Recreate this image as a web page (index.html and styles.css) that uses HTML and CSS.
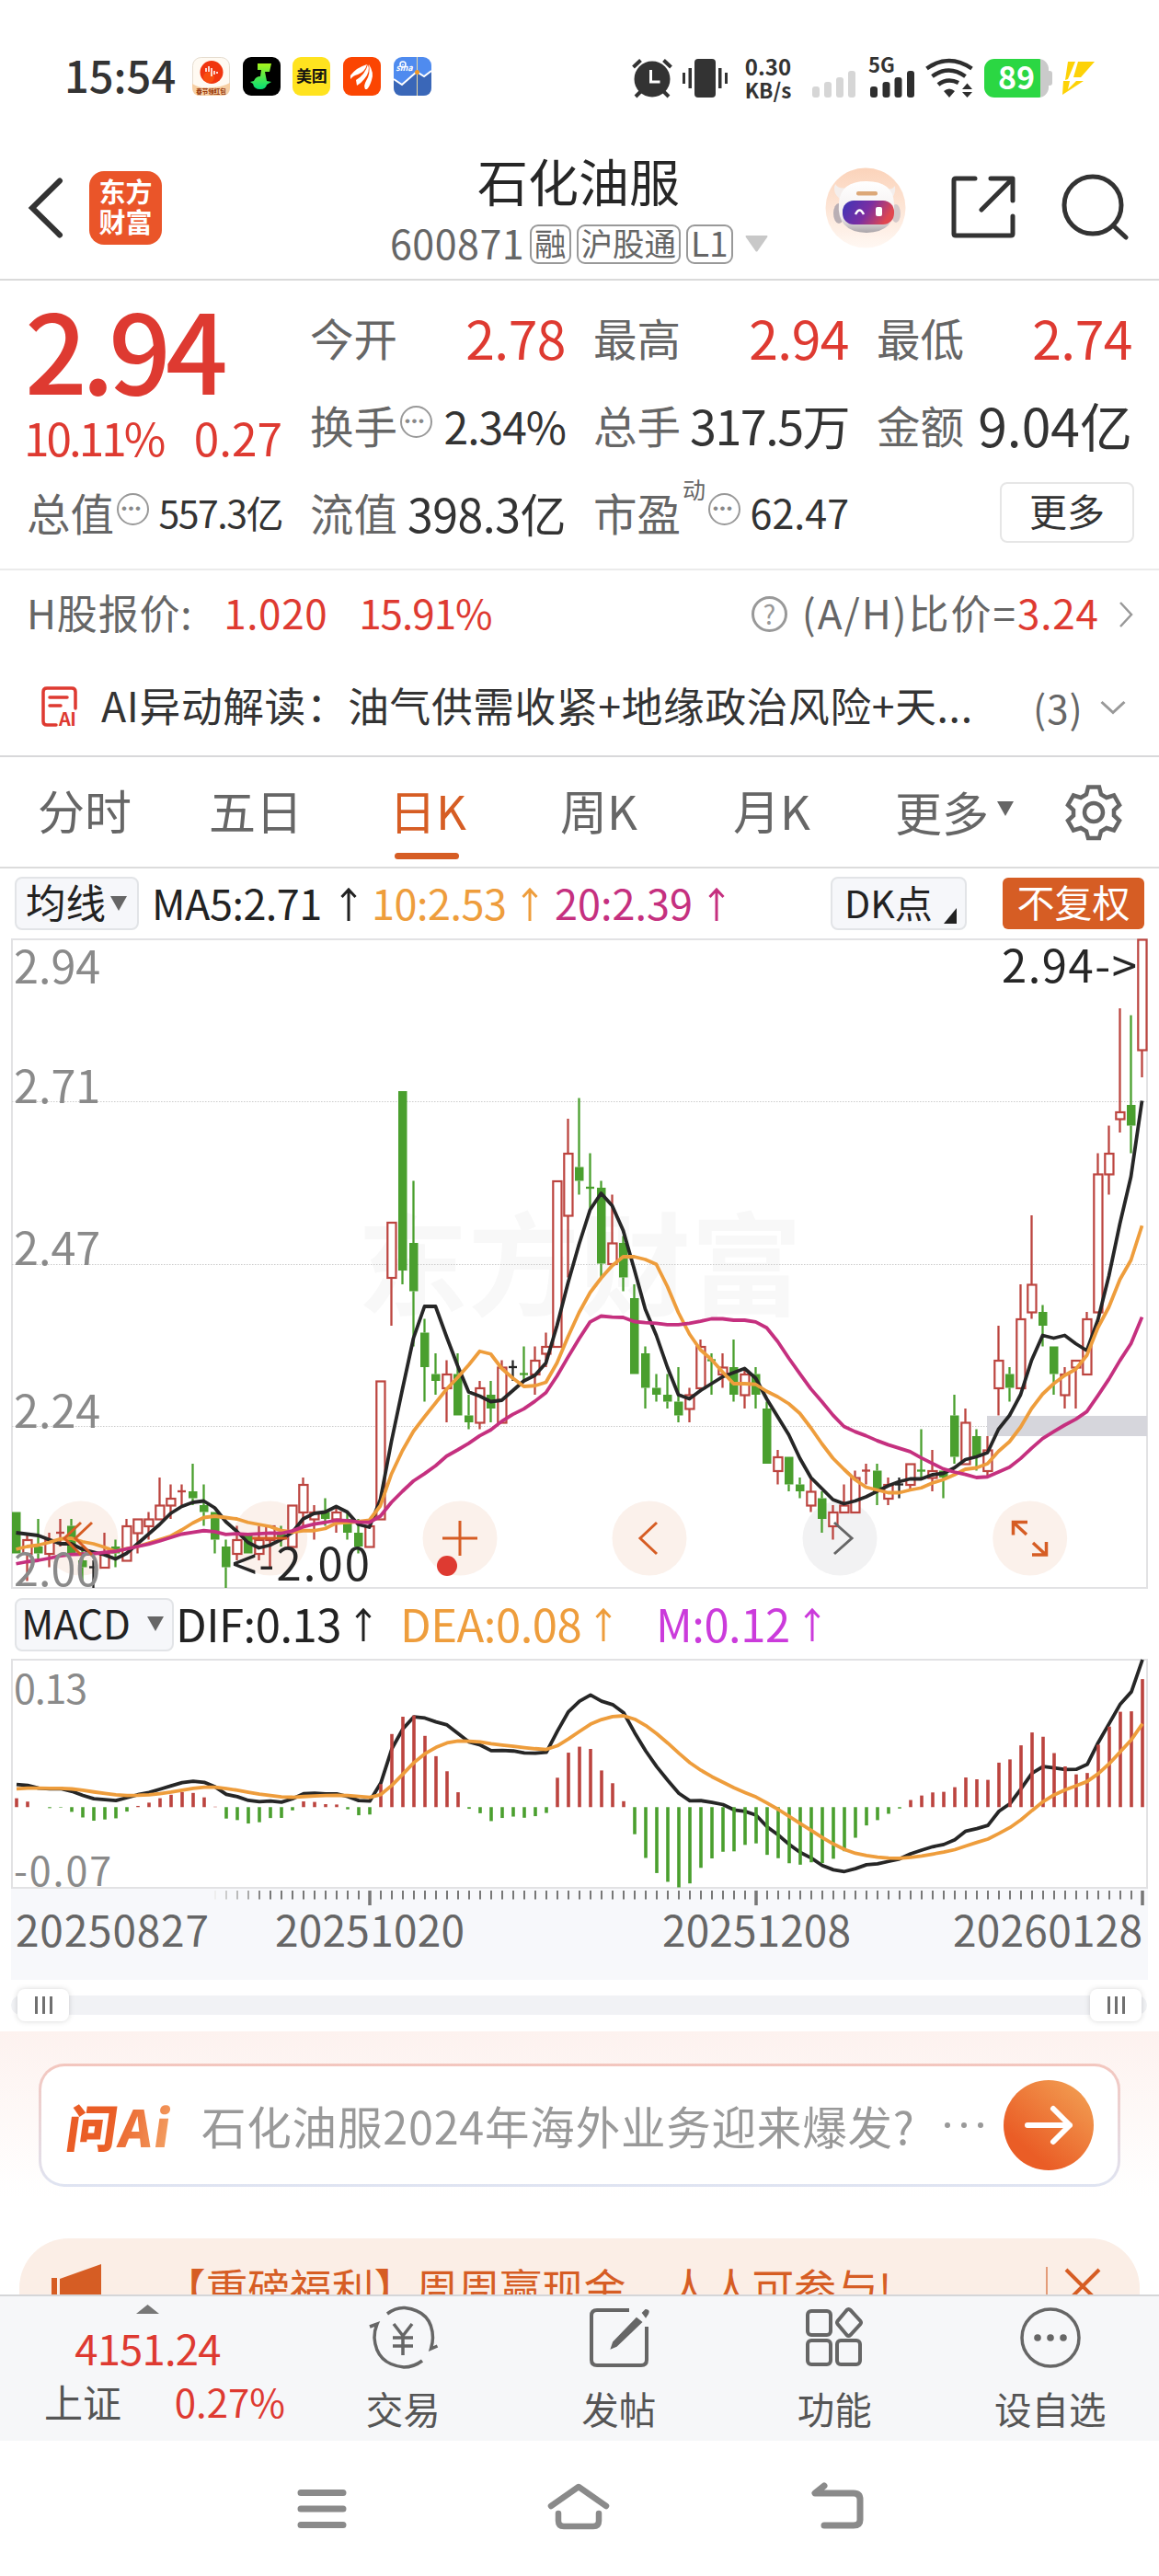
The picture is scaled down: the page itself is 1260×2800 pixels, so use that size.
FILE: index.html
```html
<!DOCTYPE html>
<html lang="zh-CN">
<head>
    <meta charset="UTF-8">
    <meta name="viewport" content="width=device-width, initial-scale=1.0">
    <title>石化油服 600871</title>
    <link rel="stylesheet" href="styles.css">
</head>
<body>
    <div class="status-bar">
        <span class="clock">15:54</span>
        <div class="app-icons">
            <svg width="41" height="42" viewBox="0 0 41 42">
                <rect x=".5" y=".5" width="40" height="41" rx="9" fill="#fffaf2" stroke="#e6ddd0"/>
                <path d="M0 29q10 6 20 4 12 0 21-5v5q0 9-9 9H9q-9 0-9-9z" fill="#f6cfa4"/>
                <circle cx="21" cy="16.500" r="12.500" fill="#f0350f"/>
                <circle cx="18" cy="22" r="6" fill="#fb5a10" opacity=".7"/>
                <path d="M15 12v4M18 10v6M21 12v9M24 15v4M27 16v2" stroke="#fff" stroke-width="1.600"/>
                <text x="20.500" y="40" class="tiny-label">春节领红包</text>
            </svg>
            <svg width="41" height="42" viewBox="0 0 41 42">
                <defs><linearGradient id="note" x1="0" y1="0" x2="0" y2="1"><stop offset="0" stop-color="#a8f51c"/><stop offset="1" stop-color="#04dd76"/></linearGradient></defs>
                <rect width="41" height="42" rx="9" fill="#000"/>
                <path d="M16 7h15l-2 9h-5l2 10 5 1-5 3q-1 5-7 5-7 0-8-6l-3-2 4-1q2-5 7-5l1-7h-4z" fill="url(#note)"/>
            </svg>
            <div class="meituan">美团</div>
            <svg width="41" height="42" viewBox="0 0 41 42">
                <rect width="41" height="42" rx="9" fill="#fb4502"/>
                <path d="M8 20q7-9 18-12-2 8-10 11-5 1-8 5zM14 25q10-6 13-17 3 8-4 16-4 5-8 7zM24 35q-2-4 1-9 5-8 3-18 6 9 3 17-2 7-5 10z" fill="#fff"/>
            </svg>
            <svg width="41" height="42" viewBox="0 0 41 42">
                <rect width="41" height="42" rx="9" fill="#4f8bef"/>
                <path d="M0 24l9 6 16-14 8 5 8-6v18q0 9-9 9H9q-9 0-9-9z" fill="#3a67b8"/>
                <path d="M0 24l9 6 16-14 8 5 8-6" fill="none" stroke="#fff" stroke-width="2"/>
                <path d="M25.500 0v42" stroke="#e8d9a5"/>
                <circle cx="25.500" cy="16.500" r="2.500" fill="#f59a23"/>
                <circle cx="10" cy="8" r="3" fill="none" stroke="#fff" stroke-width="1.500"/>
                <text x="11.500" y="15" class="sina">sina</text>
            </svg>
        </div>
        <div class="system-icons">
            <svg width="44" height="42" viewBox="0 0 44 42" fill="none" stroke="#333" stroke-width="4">
                <circle cx="22" cy="22" r="19.500" fill="#333" stroke="none"/>
                <path d="M1.500 9l8-7.500M42.500 9l-8-7.500M4 41l6-6M40 41l-6-6"/>
                <path d="M20.500 12v13h10" stroke="#fff" stroke-width="3"/>
            </svg>
            <svg class="vibrate" width="49" height="42" viewBox="0 0 49 42" fill="#333">
                <rect x="13" width="23" height="42" rx="4"/>
                <path d="M0 15h3v12H0zM6.500 10h3.500v22H6.500zM39 10h3.500v22H39zM46 15h3v12h-3z"/>
            </svg>
            <div class="net-speed"><b>0.30</b><span>KB/s</span></div>
            <svg class="signal-off" width="47" height="29" viewBox="0 0 47 29" fill="#d6d6d6">
                <rect y="17" width="8" height="12" rx="3"/><rect x="13" y="12" width="8" height="17" rx="3"/><rect x="26" y="7" width="8" height="22" rx="3"/><rect x="39" width="8" height="29" rx="3"/>
            </svg>
            <div class="signal-5g">
                <b>5G</b>
                <svg width="48" height="29" viewBox="0 0 48 29" fill="#2e2e2e">
                    <rect y="17" width="8" height="12" rx="3"/><rect x="13.500" y="12" width="8" height="17" rx="3"/><rect x="26.500" y="7" width="8" height="22" rx="3"/><rect x="40" width="8" height="29" rx="3"/>
                </svg>
            </div>
            <svg class="wifi" width="52" height="42" viewBox="0 0 52 42" fill="none" stroke="#2e2e2e" stroke-width="4.500">
                <path d="M1.500 10.500q24-17 49 0M7.500 19q18-13 36 0M14 28q10-8 22-2"/>
                <path d="M20 35q6-5 12 0l-6 7zM40 33l5.500-6.500L51 33zM40 36l5.500 6L51 36z" fill="#2e2e2e" stroke="none"/>
            </svg>
            <div class="battery"><b>89</b></div>
            <svg class="bolt" width="35" height="36" viewBox="0 0 35 36" fill="#fdd207"><path d="M6 0h8L6 19 3 20zM17 0h18L20 17h-8zM1 21h7l-2 9 9-9h8L0 36z"/></svg>
        </div>
    </div>

    <header class="header">
        <svg class="back" width="38" height="66" viewBox="0 0 38 66"><path d="M34 3.500L4 33l30 29.500" fill="none" stroke="#333" stroke-width="6" stroke-linecap="round"/></svg>
        <div class="app-logo">东方<br>财富</div>
        <div class="stock-title">
            <h1>石化油服</h1>
            <div class="stock-code">
                <span class="code">600871</span><i class="tag">融</i><i class="tag">沪股通</i><i class="tag l1">L1</i>
                <svg width="25" height="18" viewBox="0 0 25 18"><path d="M1 0h23q1 1 0 2L13.500 17q-1 1-2 0L1 2q-1-1 0-2z" fill="#c8c8c8"/></svg>
            </div>
        </div>
        <div class="header-actions">
            <svg width="88" height="88" viewBox="0 0 88 88">
                <defs>
                    <linearGradient id="halo" x1="0" y1="0" x2="0" y2="1"><stop offset="0" stop-color="#fbd3ba"/><stop offset="1" stop-color="#fff8f3"/></linearGradient>
                    <linearGradient id="visor" x1="0" y1="0" x2="1" y2=".3"><stop offset="0" stop-color="#3c35b8"/><stop offset=".55" stop-color="#7b2fa2"/><stop offset="1" stop-color="#e0474f"/></linearGradient>
                    <linearGradient id="shell" x1="0" y1="0" x2="0" y2="1"><stop offset="0" stop-color="#fff"/><stop offset=".7" stop-color="#f3efee"/><stop offset="1" stop-color="#a9a3a8"/></linearGradient>
                </defs>
                <circle cx="44" cy="44" r="43.500" fill="url(#halo)"/>
                <path d="M11 18q4 6 12 4l-4 14q-12-7-8-18zM76 20q-4 6-12 2l4 14q10-5 8-16z" fill="#f4eeec"/>
                <ellipse cx="15" cy="50" rx="6" ry="11" fill="#b9afb4"/><ellipse cx="77" cy="50" rx="5" ry="10" fill="#d3c8c9"/>
                <path d="M15 38q2-23 30-23 29 0 30 24 3 31-30 32-33-1-30-33z" fill="url(#shell)"/>
                <rect x="34" y="26" width="23" height="4.500" rx="2" fill="#dca878"/>
                <rect x="19" y="36" width="56" height="26" rx="12" fill="url(#visor)"/>
                <path d="M33 51q4.500-9 9 0" fill="none" stroke="#fff" stroke-width="2.500"/>
                <rect x="55" y="43" width="7" height="10" rx="2" fill="#fff"/>
            </svg>
            <svg class="share" width="70" height="70" viewBox="0 0 70 70" fill="none" stroke="#333" stroke-width="5" stroke-linecap="round" stroke-linejoin="round"><path d="M26 4H5Q3 4 3 6v58q0 2 2 2h60q2 0 2-2V45M43 4h24v24M66 5L33 38"/></svg>
            <svg class="search" width="72" height="72" viewBox="0 0 72 72" fill="none" stroke="#333" stroke-width="5" stroke-linecap="round"><circle cx="34" cy="34" r="31"/><path d="M56 56l14 13"/></svg>
        </div>
    </header>

    <section class="quote">
        <div class="price-block">
            <div class="price">2.94</div>
            <div class="change"><span>10.11%</span><span class="diff">0.27</span></div>
        </div>
        <div class="stat"><label>今开</label><span class="up big">2.78</span></div>
        <div class="stat"><label>最高</label><span class="up big">2.94</span></div>
        <div class="stat"><label>最低</label><span class="up big">2.74</span></div>
        <div class="stat"><label>换手<i class="dots">•••</i></label><span class="size-49">2.34%</span></div>
        <div class="stat"><label>总手</label><span class="size-52">317.5万</span></div>
        <div class="stat"><label>金额</label><span class="size-55">9.04亿</span></div>
        <div class="stat"><label>总值<i class="dots">•••</i></label><span class="size-40">557.3亿</span></div>
        <div class="stat"><label>流值</label><span class="size-50">398.3亿</span></div>
        <div class="stat"><label>市盈<sup>动</sup><i class="dots">•••</i></label><span class="size-42">62.47</span></div>
        <div class="stat more-cell"><button class="more">更多</button></div>
    </section>

    <div class="ah-row">
        <span class="h-label">H股报价:</span><span class="up h-price">1.020</span><span class="up h-change">15.91%</span>
        <div class="ah-ratio">
            <i class="question">?</i><span class="ratio-label">(A/H)比价=</span><span class="up">3.24</span>
            <svg width="16" height="28" viewBox="0 0 16 28"><path d="M2 1l12 13L2 27" fill="none" stroke="#999" stroke-width="2.500"/></svg>
        </div>
    </div>

    <div class="ai-row">
        <svg width="40" height="45" viewBox="0 0 40 45" fill="none" stroke="#de3a31" stroke-width="3.500" stroke-linecap="round">
            <path d="M37 24V6q0-4-4-4H6Q2 2 2 6v32q0 4 4 4h10M9 12h19M9 21h12"/>
            <text x="19" y="43" class="ai-mark">AI</text>
        </svg>
        <p>AI异动解读：油气供需收紧+地缘政治风险+天...</p>
        <span class="count">(3)</span>
        <svg width="28" height="16" viewBox="0 0 28 16"><path d="M1.500 2L14 13.500 26.500 2" fill="none" stroke="#999" stroke-width="3"/></svg>
    </div>

    <nav class="period-tabs">
        <span>分时</span>
        <span>五日</span>
        <span class="active">日K</span>
        <span>周K</span>
        <span>月K</span>
        <span class="more-tab">更多<svg width="18" height="18" viewBox="0 0 18 18"><path d="M0 1h18L9 17z" fill="#666"/></svg></span>
        <svg class="gear" width="60" height="60" viewBox="0 0 60 60" fill="none" stroke="#666" stroke-width="4.500">
            <path d="M24 2.500h12l2 8 6 3.500 8-2.500 6 10.500-6 5.500v6l6 5.500-6 10.500-8-2.500-6 3.500-2 7.500H24l-2-7.500-6-3.500-8 2.500-6-10.500L8 33.500v-6L2 22 8 11.500l8 2.500 6-3.500z"/>
            <circle cx="30" cy="30" r="10"/>
        </svg>
    </nav>

    <div class="indicator-row">
        <div class="pill avg">均线<svg width="18" height="18" viewBox="0 0 18 18"><path d="M0 1h18L9 17z" fill="#666"/></svg></div>
        <span class="ma5">MA5:2.71<svg class="arrow"><use href="#arrow-up"/></svg></span>
        <span class="ma10">10:2.53<svg class="arrow"><use href="#arrow-up"/></svg></span>
        <span class="ma20">20:2.39<svg class="arrow"><use href="#arrow-up"/></svg></span>
        <div class="pill dk">DK点<svg width="14" height="17" viewBox="0 0 14 17"><path d="M14 0v17H0z" fill="#222"/></svg></div>
        <div class="fuquan">不复权</div>
    </div>

    <svg id="kline" width="1260" height="716" viewBox="0 1014 1260 716"></svg>

    <div class="indicator-row macd-row">
        <div class="pill macd">MACD<svg width="18" height="18" viewBox="0 0 18 18"><path d="M0 1h18L9 17z" fill="#666"/></svg></div>
        <span class="dif">DIF:0.13<svg class="arrow"><use href="#arrow-up"/></svg></span>
        <span class="dea">DEA:0.08<svg class="arrow"><use href="#arrow-up"/></svg></span>
        <span class="m">M:0.12<svg class="arrow"><use href="#arrow-up"/></svg></span>
    </div>

    <svg id="macd" width="1260" height="351" viewBox="0 1801 1260 351"></svg>

    <div class="range-slider">
        <div class="handle"><i></i><i></i><i></i></div>
        <div class="handle"><i></i><i></i><i></i></div>
    </div>

    <div class="ask-section">
        <div class="ask-box">
            <span class="ask-logo">问Ai</span>
            <span class="ask-text">石化油服2024年海外业务迎来爆发?</span>
            <span class="ask-dots"><i></i><i></i><i></i></span>
            <svg width="98" height="98" viewBox="0 0 98 98">
                <defs><linearGradient id="go" x1="1" y1="0" x2=".3" y2=".8"><stop offset="0" stop-color="#f3a557"/><stop offset="1" stop-color="#ea5d26"/></linearGradient></defs>
                <circle cx="49" cy="49" r="49" fill="url(#go)"/>
                <path d="M26 49h46M54 31l18 18-18 18" fill="none" stroke="#fff" stroke-width="6" stroke-linecap="round" stroke-linejoin="round"/>
            </svg>
        </div>
        <div class="banner">
            <svg class="horn" width="54" height="50" viewBox="0 0 54 50" fill="#d65d24"><path d="M0 15h6v35H0zM9 16L54 0v50H9z"/></svg>
            <span>【重磅福利】周周赢现金，人人可参与!</span>
            <i class="banner-divider"></i>
            <svg class="close" width="38" height="38" viewBox="0 0 38 38"><path d="M1 1l36 36M37 1L1 37" stroke="#d65d24" stroke-width="4"/></svg>
        </div>
    </div>

    <div class="bottom-bar">
        <div class="index">
            <svg width="25" height="10" viewBox="0 0 25 10"><path d="M12.500 0L25 10H0z" fill="#777"/></svg>
            <div class="index-value">4151.24</div>
            <div class="index-line"><span>上证</span><span class="up">0.27%</span></div>
        </div>
        <div class="action">
            <svg width="78" height="68" viewBox="0 0 78 68" fill="none" stroke="#666" stroke-width="3.500">
                <path d="M22 8Q31 1 41 1.500 71 5 71.500 34q0 5-2 12l7-3M60 59q-9 7-20 7Q10 63 8 34q0-8 3-15l-8 3"/>
                <path d="M29 19l10 13 10-13M39 32v21M28 34h22M28 43h22"/>
            </svg>
            <span>交易</span>
        </div>
        <div class="action">
            <svg width="78" height="68" viewBox="0 0 78 68" fill="none" stroke="#666" stroke-width="4">
                <path d="M50 4H15q-6 0-6 6v48q0 6 6 6h48q6 0 6-6V22"/>
                <path d="M58 13l5 4-27 26-5 2 2-6zM65 7l3-3q4 0 2 4l-2 3z" fill="#666" stroke-width="2"/>
            </svg>
            <span>发帖</span>
        </div>
        <div class="action">
            <svg width="78" height="68" viewBox="0 0 78 68" fill="none" stroke="#666" stroke-width="4">
                <rect x="10" y="5" width="25" height="26" rx="4"/><rect x="10" y="37" width="25" height="26" rx="4"/><rect x="42" y="37" width="25" height="26" rx="4"/>
                <path d="M54.500 3q1 0 2 1l11 12q1 1.500 0 3l-11 12q-2 2-4 0l-10-12q-1-1.500 0-3l10-12q1-1 2-1z"/>
            </svg>
            <span>功能</span>
        </div>
        <div class="action">
            <svg width="78" height="68" viewBox="0 0 78 68" fill="#666">
                <circle cx="39" cy="34" r="31" fill="none" stroke="#666" stroke-width="3.500"/>
                <circle cx="25" cy="34" r="3.800"/><circle cx="39" cy="34" r="3.800"/><circle cx="53" cy="34" r="3.800"/>
            </svg>
            <span>设自选</span>
        </div>
    </div>

    <div class="nav-bar">
        <svg width="54" height="44" viewBox="0 0 54 44" stroke="#8a8a8a" stroke-width="7" stroke-linecap="round"><path d="M4 4.500h46M4 22h46M4 39.500h46"/></svg>
        <svg class="home" width="68" height="52" viewBox="0 0 68 52" fill="none" stroke="#8a8a8a" stroke-width="6.500" stroke-linecap="round" stroke-linejoin="round"><path d="M4 26L34 5l30 21M12 34v8q0 6 6 6h32q6 0 6-6v-8"/></svg>
        <svg class="return" width="58" height="52" viewBox="0 0 58 52" fill="none" stroke="#8a8a8a" stroke-width="7" stroke-linecap="round" stroke-linejoin="round"><path d="M15 4L5 12h42q7 0 7 7v22q0 6-7 6H15"/></svg>
    </div>

    <svg class="sprite">
        <symbol id="arrow-up" viewBox="0 0 18 38"><path d="M9 37V3M1.500 11L9 3l7.500 8" fill="none" stroke="currentColor" stroke-width="3"/></symbol>
    </svg>
    <script src="chart.js"></script>
</body>
</html>
```
FILE: styles.css
```css
* {
    box-sizing: border-box;
}
body {
    width: 1260px;
    height: 2800px;
    margin: 0;
    overflow: hidden;
    background: #fff;
    color: #333;
    font-family: "Noto Sans CJK SC", "Noto Sans", sans-serif;
    line-height: 1;
}
svg {
    display: block;
    flex: none;
    overflow: visible;
}
i {
    font-style: normal;
}
.sprite {
    width: 0;
    height: 0;
}
.up {
    color: #de3a31;
}

/* status bar */
.status-bar {
    display: flex;
    align-items: center;
    height: 166px;
    padding: 0 70px 0 70px;
}
.clock {
    width: 139px;
    font-size: 47px;
    font-weight: 500;
    letter-spacing: 0;
    padding-bottom: 5px;
}
.app-icons {
    display: flex;
    gap: 13.7px;
}
.tiny-label {
    font-size: 6.5px;
    font-weight: 900;
    fill: #9c3d10;
    text-anchor: middle;
}
.sina {
    font-size: 9px;
    font-weight: 700;
    font-style: italic;
    fill: #fff;
    text-anchor: middle;
}
.meituan {
    width: 41px;
    height: 42px;
    border-radius: 9px;
    background: #ffe31f;
    color: #111;
    font-size: 17px;
    font-weight: 700;
    line-height: 40px;
    text-align: center;
}
.system-icons {
    display: flex;
    align-items: flex-end;
    margin-left: auto;
}
.vibrate {
    margin-left: 11px;
}
.net-speed {
    display: flex;
    flex-direction: column;
    justify-content: space-between;
    width: 54px;
    height: 46px;
    margin: 0 0 -1px 17px;
    text-align: center;
}
.net-speed b {
    font-size: 24px;
    line-height: 22px;
}
.net-speed span {
    font-size: 22.5px;
    font-weight: 700;
    line-height: 20px;
}
.signal-off {
    margin-left: 21px;
}
.signal-5g {
    margin-left: 16px;
}
.signal-5g b {
    display: block;
    height: 15px;
    margin-left: -2px;
    font-size: 22px;
    line-height: 15px;
}
.wifi {
    margin-left: 12px;
}
.battery {
    width: 70px;
    height: 42px;
    margin-left: 12px;
    border-radius: 11px;
    background: linear-gradient(90deg, #2bd743 61px, #cacaca 61px);
    color: #fff;
    font-size: 34px;
    line-height: 38px;
    text-align: center;
    position: relative;
}
.battery::after {
    content: "";
    position: absolute;
    right: -4px;
    top: 13px;
    width: 6px;
    height: 16px;
    border-radius: 3px;
    background: #cacaca;
}
.bolt {
    margin: 0 0 3px 15px;
}

/* title */
.header {
    display: flex;
    height: 139px;
    border-bottom: 2px solid #dadada;
}
.back {
    margin: 27px 0 0 31px;
}
.app-logo {
    width: 79px;
    height: 80px;
    margin: 20px 0 0 28px;
    padding-top: 5px;
    border-radius: 16px;
    background: #ea5529;
    color: #fff;
    font-size: 29px;
    font-weight: 700;
    line-height: 33px;
    text-align: center;
}
.stock-title {
    width: 454px;
    margin-left: 226px;
}
h1 {
    margin: 0;
    font-size: 55px;
    font-weight: 400;
    line-height: 58px;
    text-align: center;
    color: #262626;
}
.stock-code {
    display: flex;
    align-items: center;
    height: 42px;
    margin-top: 20px;
    margin-left: 22px;
    color: #666;
    font-size: 43px;
}
.code {
    width: 152px;
    letter-spacing: 0.5px;
    padding-bottom: 4px;
}
.tag {
    height: 43px;
    margin-right: 6px;
    padding: 0 3px;
    border: 2px solid #999;
    border-radius: 9px;
    font-size: 34.5px;
    line-height: 34px;
}
.l1 {
    font-size: 37px;
}
.stock-code svg {
    margin-left: 7px;
}
.header-actions {
    display: flex;
    margin: 16px 0 0 41px;
}
.share {
    margin: 8px 0 0 49px;
}
.search {
    margin: 7px 0 0 50px;
}

/* quote */
.quote {
    display: grid;
    grid-template-columns: repeat(4, 278px);
    grid-template-rows: 95px 95px 95px;
    column-gap: 30px;
    height: 315px;
    padding: 16px 0 0 29px;
    border-bottom: 2px solid #ebebeb;
}
.price-block {
    grid-row: span 2;
    color: #de3a31;
}
.price {
    margin: 1px 0 0 -2px;
    font-size: 119px;
    font-weight: 500;
    line-height: 110px;
    letter-spacing: -6px;
}
.change {
    display: flex;
    justify-content: space-between;
    margin: 18px 0 0 -3px;
    font-size: 49.5px;
    letter-spacing: -3px;
}
.diff {
    letter-spacing: 0;
}
.stat {
    display: flex;
    align-items: center;
    justify-content: space-between;
    padding-bottom: 4px;
    white-space: nowrap;
}
.stat label {
    display: flex;
    align-items: center;
    color: #666;
    font-size: 47.5px;
}
.big {
    font-size: 57px;
    letter-spacing: -0.5px;
}
.size-55 {
    font-size: 57px;
    letter-spacing: 0;
}
.size-52 {
    font-size: 52px;
    letter-spacing: -1.5px;
}
.size-50 {
    font-size: 50px;
    letter-spacing: -0.5px;
}
.size-49 {
    font-size: 48px;
    letter-spacing: -1px;
}
.size-42 {
    font-size: 43px;
}
.size-40 {
    font-size: 41px;
    letter-spacing: -1.5px;
}
.dots {
    width: 35px;
    height: 35px;
    margin: -6px 0 0 3px;
    border: 2.5px solid #999;
    border-radius: 50%;
    color: #888;
    font-family: "Liberation Sans", sans-serif;
    font-size: 17px;
    line-height: 29px;
    letter-spacing: 1.5px;
    text-indent: 3px;
}
.stat sup {
    align-self: flex-start;
    margin: -14px 0 0 2px;
    font-size: 25px;
}
.more-cell {
    justify-content: flex-end;
}
.more {
    width: 146px;
    height: 66px;
    padding: 0 0 5px;
    border: 2px solid #e6e6e6;
    border-radius: 8px;
    background: #fff;
    color: #333;
    font: 41px/56px "Noto Sans CJK SC", sans-serif;
}
.more-cell {
    margin-right: -2px;
}

/* H-share row */
.ah-row {
    display: flex;
    align-items: center;
    height: 98px;
    padding: 0 28px 9px 29px;
    color: #666;
    font-size: 44px;
}
.h-label {
    letter-spacing: 0.8px;
}
.h-price {
    margin-left: 34px;
    letter-spacing: 0.6px;
}
.h-change {
    margin-left: 34px;
    letter-spacing: -1px;
}
.ah-ratio {
    display: flex;
    align-items: center;
    margin-left: auto;
}
.ratio-label {
    letter-spacing: 2px;
}
.ah-ratio .up {
    width: 110px;
    letter-spacing: 0.8px;
}
.question {
    width: 39px;
    height: 39px;
    margin: 5px 16px 0 0;
    border: 3px solid #999;
    border-radius: 50%;
    color: #999;
    font-size: 29px;
    line-height: 30px;
    text-align: center;
}
.ah-ratio svg {
    margin-top: 6px;
}

/* AI row */
.ai-row {
    display: flex;
    align-items: center;
    height: 105px;
    padding: 0 36px 2px 45px;
    border-bottom: 2px solid #d8d8da;
}
.ai-mark {
    font-size: 20px;
    font-weight: 700;
    letter-spacing: -0.5px;
    fill: #de3a31;
    stroke: none;
}
.ai-row p {
    width: 1014px;
    margin: 0 0 4px 25px;
    font-size: 44.7px;
    letter-spacing: 0.65px;
    white-space: nowrap;
}
.ai-row .count {
    width: 73px;
    color: #666;
    font-size: 42px;
    letter-spacing: 1px;
}

/* period tabs */
.period-tabs {
    display: grid;
    grid-template-columns: 186px 201px 181px 188px 176px 186px 60px;
    align-items: center;
    height: 121px;
    padding: 0 0 0 41px;
    border-bottom: 2px solid #dcdcdc;
    color: #666;
    font-size: 51px;
}
.period-tabs span {
    height: 100px;
    line-height: 95px;
}
.period-tabs .active {
    position: relative;
    color: #d65d24;
    text-indent: -5px;
}
.period-tabs .active::after {
    content: "";
    position: absolute;
    left: 1px;
    bottom: -1px;
    width: 70px;
    height: 7px;
    border-radius: 4px;
    background: #d65d24;
}
.more-tab {
    display: flex;
    align-items: center;
}
.more-tab svg {
    margin: -7px 0 0 9px;
}

/* indicators */
.indicator-row {
    display: flex;
    align-items: center;
    height: 70px;
    padding: 6px 16px 0;
    font-size: 45px;
}
.indicator-row span {
    display: flex;
    align-items: center;
    height: 58px;
    padding-bottom: 4px;
    letter-spacing: -0.5px;
}
.arrow {
    width: 18px;
    height: 38px;
    margin: 5px 0 0 17px;
}
.pill {
    display: flex;
    align-items: center;
    height: 58px;
    padding-bottom: 4px;
    border: 2px solid #e2e4e7;
    border-radius: 8px;
    background: #f6f7fa;
    color: #222;
    font-size: 43.5px;
    white-space: nowrap;
}
.avg {
    width: 135px;
    padding-left: 10px;
}
.avg svg {
    margin: 4px 0 0 5px;
}
.ma5 {
    width: 239px;
    margin-left: 14px;
    color: #222;
}
.ma5 .arrow {
    margin-left: 20px;
}
.ma10 {
    width: 199px;
    color: #ee9d3c;
}
.ma20 {
    color: #c5307f;
}
.indicator-row .ma20 {
    letter-spacing: 0;
}
.dk {
    width: 148px;
    margin-left: auto;
    padding-left: 13px;
    font-size: 41px;
}
.dk svg {
    align-self: flex-end;
    margin: 0 0 1px 12px;
}
.fuquan {
    width: 154px;
    height: 56px;
    margin-left: 39px;
    border-radius: 6px;
    background: #d65d24;
    color: #fff;
    font-size: 41px;
    line-height: 51px;
    text-align: center;
}
.macd-row {
    height: 71px;
    padding-top: 0;
    font-size: 49px;
}
.macd {
    width: 173px;
    padding-left: 5px;
    font-size: 43.5px;
}
.macd svg {
    margin: 2px 9px 0 auto;
}
.dif {
    width: 244px;
    margin-left: 2px;
    color: #222;
}
.dea {
    width: 278px;
    color: #ee9d3c;
}
.m {
    color: #cb3bdb;
}
.macd-row .arrow {
    margin-left: 15px;
}

/* charts */
.axis-label {
    fill: #8a8a8a;
}
.date-label {
    fill: #666;
    font-size: 46px;
}
.price-mark {
    fill: #262626;
    font-size: 49px;
}
.watermark {
    fill: #f8f8f8;
    font-size: 121px;
    font-weight: 700;
}

/* range slider */
.range-slider {
    display: flex;
    justify-content: space-between;
    align-items: center;
    height: 21px;
    margin: 17px 13px 18px 12px;
    padding: 0 6px 0 7px;
    border-radius: 11px;
    background: #f1f2f5;
}
.handle {
    display: flex;
    align-items: center;
    justify-content: center;
    gap: 5px;
    width: 56px;
    height: 35px;
    border-radius: 8px;
    background: #fff;
    box-shadow: 0 0 6px rgba(0, 0, 0, 0.16);
}
.handle i {
    width: 3px;
    height: 19px;
    background: #707070;
}

/* ask AI */
.ask-section {
    height: 286px;
    padding: 35px 21px 0;
    background: linear-gradient(#fdf2ef, #fff 180px);
    overflow: hidden;
}
.ask-box {
    display: flex;
    align-items: center;
    height: 134px;
    margin: 0 21px;
    padding: 0 25px;
    border: 3px solid transparent;
    border-radius: 28px;
    background: linear-gradient(#fff, #fff) padding-box, linear-gradient(#f3c6be, #dfe4f2) border-box;
}
.ask-logo {
    width: 123px;
    margin-right: 26px;
    padding-left: 3px;
    background: linear-gradient(100deg, #ea5d26 40%, #f4a76a);
    background-clip: text;
    -webkit-background-clip: text;
    color: transparent;
    font-size: 55px;
    font-weight: 900;
    letter-spacing: 2px;
    line-height: 64px;
    transform: skewX(-8deg);
    white-space: nowrap;
}
.ask-text {
    width: 808px;
    color: #999;
    font-size: 48.5px;
    letter-spacing: 0.8px;
    white-space: nowrap;
}
.ask-dots {
    display: flex;
    gap: 12px;
    width: 64px;
}
.ask-dots i {
    width: 6px;
    height: 6px;
    border-radius: 50%;
    background: #999;
}
.banner {
    display: flex;
    height: 120px;
    margin-top: 56px;
    padding: 29px 35px 0;
    border-radius: 54px;
    background: #fbeee6;
    color: #d65d24;
    font-size: 45.7px;
}
.banner span {
    width: 893px;
    margin: 1px 0 0 68px;
    white-space: nowrap;
}
.banner .horn {
    margin-top: -1px;
}
.banner-divider {
    width: 2px;
    height: 60px;
    margin: 2px 19px 0 66px;
    background: #e39c79;
}
.close {
    margin-top: 4px;
}

/* bottom bar */
.bottom-bar {
    display: flex;
    height: 159px;
    border-top: 2px solid #d5d6d8;
    background: #f6f7f9;
}
.index {
    width: 321px;
    padding-top: 9px;
    text-align: center;
}
.index svg {
    margin: 0 auto;
}
.index-value {
    margin-top: 14px;
    color: #de3a31;
    font-size: 45.5px;
    letter-spacing: -0.8px;
}
.index-line {
    display: flex;
    justify-content: space-between;
    margin: 14px 11px 0 48px;
    color: #555;
    font-size: 42px;
    letter-spacing: 0;
}
.action {
    width: 234.5px;
    padding-top: 11px;
    color: #555;
    font-size: 40.5px;
    text-align: center;
}
.action svg {
    margin: 0 auto 23px;
}

/* system navigation */
.nav-bar {
    display: flex;
    align-items: center;
    justify-content: space-between;
    height: 147px;
    padding: 0 321px 0 323px;
}
.home,
.return {
    margin-top: -6px;
}
```
FILE: chart.js
```js
// Daily candles: [open, close, high, low] in cents
const candles = [
    [211,205,211,205],[205,207,208,201],[206,205,210,204],[205,207,208,203],[208,208,210,206],[209,205,210,205],
    [204,203,206,201],[203,203,204,200],[203,205,208,203],[206,205,207,203],[204,209,210,204],[208,210,210,205],
    [209,210,211,207],[210,212,216,210],[212,213,215,210],[214,214,215,212],[214,213,218,212],[212,211,215,209],
    [211,207,211,205],[206,203,207,200],[205,207,209,204],[208,205,208,205],[205,207,209,204],[207,209,209,203],
    [208,207,209,206],[206,212,212,206],[211,215,216,209],[210,211,212,207],[211,210,213,209],[210,211,212,208],
    [210,208,211,207],[208,206,210,205],[206,209,209,206],[210,230,230,210],[245,253,253,238],[272,246,272,244],
    [250,243,259,235],[237,232,239,227],[231,230,234,228],[229,231,233,224],[231,225,234,225],[225,224,228,223],
    [224,229,230,223],[228,226,230,224],[224,232,233,224],[232,232,233,230],[231,231,235,230],[231,233,235,228],
    [234,235,237,232],[235,259,259,235],[254,263,268,245],[261,259,271,257],[258,258,263,255],[258,247,259,245],
    [247,250,257,247],[250,245,251,243],[242,231,244,231],[234,229,235,226],[229,228,231,227],[228,227,231,226],
    [227,225,232,224],[226,228,229,224],[229,235,236,229],[233,233,234,228],[231,232,234,229],[232,228,236,227],
    [228,231,232,226],[231,228,232,226],[226,218,227,218],[217,219,220,215],[219,215,219,214],[215,214,216,213],
    [212,214,216,211],[213,210,214,208],[209,211,212,207],[211,212,215,211],[211,216,217,211],[217,217,218,215],
    [217,214,218,212],[213,215,216,212],[215,215,216,213],[215,218,218,214],[217,217,223,216],[216,217,220,214],
    [217,216,217,213],[225,219,228,218],[218,224,226,218],[222,219,223,217],[217,220,222,216],[229,233,238,225],
    [231,229,232,227],[229,239,244,229],[240,244,254,239],[240,238,241,235],[235,231,235,228],[228,231,232,226],
    [232,233,233,226],[231,239,240,231],[240,260,263,240],[260,263,267,257],[268,269,284,266],[270,267,283,263],
    [278,294,294,274]
];
// closes before the first visible day, for the moving averages
const history = [201,201,201,201,201,202,202,201,202,202,203,203,203,203,204,208,206,210,211];

// flat days: green and red dashes, all others are black
const flatRed = [4, 15, 77];
const flatGreen = [46, 52, 63, 82];

const RED = '#bc443f', GREEN = '#4a9f2e', BLACK = '#262626', ORANGE = '#ee9d3c', PINK = '#c5307f';
const x = i => 17.5 + i * 12;
const y = cents => 1726 - (cents - 200) * 7.5;

function line(x1, y1, x2, y2, color, width) {
    return `<line x1="${x1}" y1="${y1}" x2="${x2}" y2="${y2}" stroke="${color}" stroke-width="${width}"/>`;
}
function curve(points, color) {
    return `<polyline points="${points.map(p => p.join(',')).join(' ')}" fill="none" stroke="${color}" stroke-width="3.8" stroke-linejoin="round"/>`;
}
function text(str, tx, ty, cls, extra) {
    return `<text x="${tx}" y="${ty}" class="${cls}" ${extra || ''}>${str}</text>`;
}

function drawKline() {
    let out = '<rect x="13" y="1021" width="1234" height="705" fill="none" stroke="#e2e2e4" stroke-width="2"/>';
    out += text('东方财富', 388, 1420, 'watermark', 'textLength="484"');
    [1197.5, 1374.5, 1550.5].forEach(gy => {
        out += `<line x1="13" y1="${gy}" x2="1247" y2="${gy}" stroke="#ccc" stroke-width="1" stroke-dasharray="1.5 1.5"/>`;
    });
    [87.7, 293.7, 500, 706, 913, 1119.7].forEach((cx, i) => {
        out += `<circle cx="${cx}" cy="1672" r="40.5" fill="${i === 4 ? '#f2f2f3' : '#fbf1eb'}"/>`;
    });
    out += '<rect x="1073" y="1539" width="174" height="22" fill="#d6d6dc"/>';

    candles.forEach(([open, close, high, low], i) => {
        const cx = x(i), top = y(Math.max(open, close)), bottom = y(Math.min(open, close));
        if (open === close) {
            const color = flatRed.includes(i) ? RED : flatGreen.includes(i) ? GREEN : BLACK;
            out += line(cx, y(high), cx, y(low), color, 2.3) + line(cx - 4.5, top, cx + 4.5, top, color, 2.3);
            return;
        }
        const color = close > open ? RED : GREEN;
        out += line(cx, y(high), cx, top, color, 2.3) + line(cx, bottom, cx, y(low), color, 2.3);
        if (close > open) {
            out += `<rect x="${cx - 4.2}" y="${top + .5}" width="9.2" height="${bottom - top}" fill="#fff" stroke="${RED}" stroke-width="2.2"/>`;
        } else {
            out += `<rect x="${cx - 4.5}" y="${top}" width="9.5" height="${bottom - top}" fill="${GREEN}"/>`;
        }
    });

    const closes = history.concat(candles.map(c => c[1]));
    [[5, BLACK], [10, ORANGE], [20, PINK]].forEach(([n, color]) => {
        out += curve(candles.map((c, i) => {
            const end = i + history.length + 1;
            const sum = closes.slice(end - n, end).reduce((a, b) => a + b, 0);
            return [x(i), y(sum / n)];
        }), color);
    });

    [['2.94', 1069], ['2.71', 1199], ['2.47', 1375], ['2.24', 1552], ['2.00', 1724]].forEach(([label, ty]) => {
        out += text(label, 15, ty, 'axis-label', 'font-size="48.5"');
    });
    out += text('2.94-&gt;', 1089, 1068, 'price-mark', 'textLength="147"');
    out += text('&lt;-2.00', 252, 1718, 'price-mark', 'textLength="150"');

    // chart buttons
    out += '<g fill="none" stroke="#d65d24" stroke-width="3">'
        + '<path d="M88 1655L70 1672l18 18M100 1655l-18 17 18 18"/>'
        + '<path d="M274 1672h38M481 1672h38M500 1653v38"/>'
        + '<path d="M714 1655l-18 17 18 17"/>'
        + '<path d="M907 1655l19 17-19 17" stroke="#666"/>'
        + '<path d="M1117 1654.5h-15.500v14M1102 1655l14 13M1122 1690h15.500v-14M1137 1690l-14-13" stroke-width="3.5"/>'
        + '</g><circle cx="486" cy="1702" r="11" fill="#de3a31"/>';
    document.getElementById('kline').innerHTML = out;
}

function drawMacd() {
    let ema12 = 206.2, ema26 = 204.15, dea = 1.65;
    const rows = candles.map((c, i) => {
        if (i > 0) {
            ema12 += (c[1] - ema12) * 2 / 13;
            ema26 += (c[1] - ema26) * 2 / 27;
            dea += (ema12 - ema26 - dea) * 2 / 10;
        }
        return { dif: ema12 - ema26, dea: dea, bar: 2 * (ema12 - ema26 - dea) };
    });
    const max = Math.max(...rows.map(r => r.dif)), min = Math.min(...rows.map(r => r.bar));
    const my = v => 1804 + (max - v) / (max - min) * 247.5;
    const mx = i => 18 + i * 12;

    let out = '<rect x="12" y="2053" width="1236" height="99" fill="#f7f8fb"/>'
        + '<rect x="13" y="1804" width="1234" height="248" fill="#fff" stroke="#e2e2e4" stroke-width="2"/>';
    out += curve(rows.map((r, i) => [mx(i), my(r.dif)]), BLACK);
    rows.forEach((r, i) => {
        out += line(mx(i), my(0), mx(i), my(r.bar), r.bar > 0 ? RED : GREEN, 3.6);
    });
    out += curve(rows.map((r, i) => [mx(i), my(r.dea)]), ORANGE);
    out += text('0.13', 15, 1852, 'axis-label', 'font-size="43" textLength="80"');
    out += text('-0.07', 15, 2050, 'axis-label', 'font-size="43" textLength="106"');

    for (let i = 18; i <= 102; i++) {
        const major = [32, 67, 102].includes(i);
        const shade = i < 23 ? ['#eee', '#ccc', '#bbb', '#aaa', '#888'][i - 18] : '#777';
        out += line(mx(i), 2055, mx(i), major ? 2071 : 2064.5, shade, major ? 3.5 : 2);
    }
    [['20250827', 17, 210], ['20251020', 299, 206], ['20251208', 720, 205], ['20260128', 1036, 206]].forEach(([d, tx, w]) => {
        out += text(d, tx, 2116, 'date-label', `textLength="${w}"`);
    });
    document.getElementById('macd').innerHTML = out;
}

drawKline();
drawMacd();
```
